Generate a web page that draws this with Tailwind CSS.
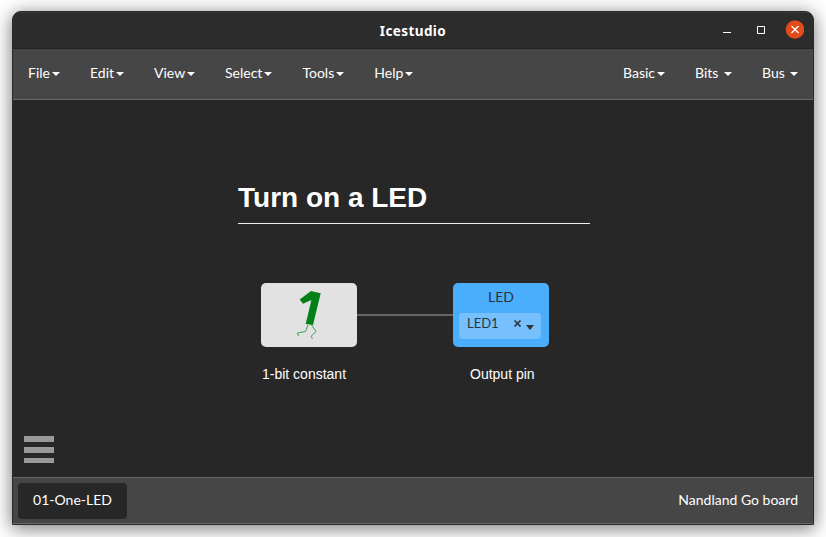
<!DOCTYPE html>
<html lang="en">
<head>
<meta charset="utf-8">
<title>Icestudio</title>
<script src="https://cdn.jsdelivr.net/npm/@tailwindcss/browser@4"></script>
</head>
<body class="h-[537px] w-[826px] overflow-hidden bg-white pl-3 pt-[11px] font-['Lato',sans-serif] text-sm text-white">
<div class="flex h-[514px] w-[802px] flex-col overflow-hidden rounded-t-[9px] border border-[#2a2a2a] bg-[#272727] shadow-[0_3px_18px_1px_rgba(0,0,0,0.5)]">
  <header class="grid h-[37px] shrink-0 grid-cols-[1fr_auto_1fr] items-center border-t border-b border-t-[#3a3a3a] border-b-[#222] bg-[#2c2c2c]">
    <div></div>
    <h1 class="whitespace-nowrap pt-px font-['Noto_Sans',sans-serif] text-[13.5px] font-bold leading-5 tracking-[0.4px]">Icestudio</h1>
    <div class="flex items-center justify-end pb-[2px] pr-[9px]">
      <svg class="h-[19px] w-[81px]" viewBox="0 0 81 19" fill="none">
        <path d="M0 12.500h8" stroke="#fff"/>
        <path d="M34.500 6.500h7v7h-7z" stroke="#fff"/>
        <circle cx="72" cy="9.500" r="9.300" fill="#e24c1a"/>
        <path d="M68.500 6l7 7m0-7l-7 7" stroke="#fff" stroke-width="1.300"/>
      </svg>
    </div>
  </header>
  <nav class="flex h-[51px] shrink-0 items-center justify-between border-b border-[#686868] bg-[#464646] px-[15px] pb-[3px]">
    <ul class="flex gap-[30px] [&_svg]:mt-0.5">
      <li class="flex w-8 items-center justify-between">File<svg class="h-1 w-2" viewBox="0 0 8 4"><path d="M0 0h8L4 4z" fill="#fff"/></svg></li>
      <li class="flex w-[34px] items-center justify-between">Edit<svg class="h-1 w-2" viewBox="0 0 8 4"><path d="M0 0h8L4 4z" fill="#fff"/></svg></li>
      <li class="flex w-[41px] items-center justify-between">View<svg class="h-1 w-2" viewBox="0 0 8 4"><path d="M0 0h8L4 4z" fill="#fff"/></svg></li>
      <li class="flex w-[47.4px] items-center justify-between">Select<svg class="h-1 w-2" viewBox="0 0 8 4"><path d="M0 0h8L4 4z" fill="#fff"/></svg></li>
      <li class="flex w-[41.9px] items-center justify-between">Tools<svg class="h-1 w-2" viewBox="0 0 8 4"><path d="M0 0h8L4 4z" fill="#fff"/></svg></li>
      <li class="flex w-[38.7px] items-center justify-between">Help<svg class="h-1 w-2" viewBox="0 0 8 4"><path d="M0 0h8L4 4z" fill="#fff"/></svg></li>
    </ul>
    <ul class="flex gap-[30px] [&_svg]:mt-0.5">
      <li class="flex w-[42px] items-center justify-between">Basic<svg class="h-1 w-2" viewBox="0 0 8 4"><path d="M0 0h8L4 4z" fill="#fff"/></svg></li>
      <li class="flex w-[37px] items-center justify-between">Bits<svg class="h-1 w-2" viewBox="0 0 8 4"><path d="M0 0h8L4 4z" fill="#fff"/></svg></li>
      <li class="flex w-9 items-center justify-between">Bus<svg class="h-1 w-2" viewBox="0 0 8 4"><path d="M0 0h8L4 4z" fill="#fff"/></svg></li>
    </ul>
  </nav>
  <main class="relative min-h-0 flex-1 font-['Liberation_Sans',sans-serif]">
    <h2 class="absolute left-[225px] top-[80px] h-[44px] w-[352px] border-b border-[#eee] text-[28px] font-bold leading-9">Turn on a LED</h2>
    <div class="absolute left-[344px] top-[214px] h-0.5 w-24 bg-[#666]"></div>
    <div class="absolute left-[248px] top-[183px] h-16 w-24 rounded-[5px] bg-[#e2e2e2]">
      <svg class="h-16 w-24" viewBox="0 0 96 64" fill="none">
        <path d="M50 8L59.700 10.300L52 42L44.700 41L50.400 17L42 20.700L38.700 16.400Z" fill="#048116"/>
        <path d="M47 42L44.500 48.500L36.500 50L37.500 53M50.500 42L55 48.300L50 53.500L51.500 55.800" stroke="#3c9f4b" stroke-width="1"/>
      </svg>
    </div>
    <p class="absolute left-[249px] top-[264px] whitespace-nowrap leading-5">1-bit constant</p>
    <section class="absolute left-[440px] top-[183px] h-16 w-24 rounded-[5px] bg-[#4baefc] px-1.5 font-['Lato',sans-serif] text-[#2b3540]">
      <div class="flex h-[30px] items-center justify-center pb-0.5">LED</div>
      <div class="flex h-[26px] w-[82px] items-start rounded-[4px] bg-[#75c0fd] pl-2">
        <span class="w-[46px] text-[13px] leading-5">LED1</span>
        <svg class="h-[26px] w-6" viewBox="0 0 24 26" fill="none"><path d="M1.500 7.500l6 6m0-6l-6 6" stroke="#2b3540" stroke-width="1.700"/><path d="M13 12h8l-4 5z" fill="#333"/></svg>
      </div>
    </section>
    <p class="absolute left-[457px] top-[264px] whitespace-nowrap leading-5">Output pin</p>
    <svg class="absolute left-[11px] top-[336px] h-[27px] w-[30px]" viewBox="0 0 30 27"><path d="M0 0h30v6H0zM0 11h30v6H0zM0 22h30v5H0z" fill="#999"/></svg>
  </main>
  <footer class="flex h-[47px] shrink-0 items-center justify-between border-y border-[#686868] bg-[#464646] pl-[5px] pr-[15px]">
    <div class="flex h-9 w-[109px] items-center justify-center rounded bg-[#272727] pb-0.5">01-One-LED</div>
    <span class="pb-0.5">Nandland Go board</span>
  </footer>
</div>
</body>
</html>
